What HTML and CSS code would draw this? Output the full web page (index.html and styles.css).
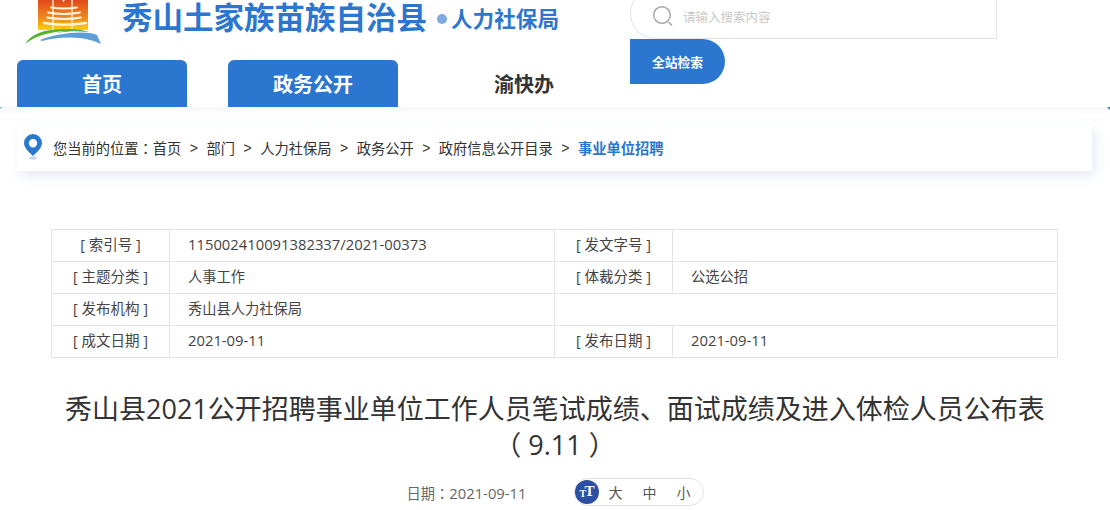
FILE: index.html
```html
<!DOCTYPE html>
<html lang="zh-CN">
<head>
<meta charset="utf-8">
<title>事业单位招聘</title>
<link rel="stylesheet" href="styles.css">
</head>
<body>
<header class="header">
  <div class="header-left">
    <div class="brand">
      <svg class="logo" width="80" height="47" viewBox="24 0 80 47">
        <defs>
          <linearGradient id="sky" x1="0" y1="0" x2="0" y2="1">
            <stop offset="0" stop-color="#e0481a"/>
            <stop offset="0.6" stop-color="#ee8a1c"/>
            <stop offset="1" stop-color="#fcd200"/>
          </linearGradient>
        </defs>
        <rect x="38" y="0" width="50" height="30" fill="url(#sky)"/>
        <path d="M62 0h3l-1.500 2z" fill="#fdf3dc"/>
        <g fill="none" stroke="#fff3dc" stroke-linecap="round">
          <path d="M53 0v30M72 0v30" stroke-width="1.300"/>
          <path d="M51 7.500q13 2 26 0" stroke-width="1.800"/>
          <path d="M48 12.500q16 3 32 0" stroke-width="2"/>
          <path d="M47 17.500q17 3 34 0" stroke-width="1.800"/>
          <path d="M44 23q19 3.500 42 0" stroke-width="2.600"/>
        </g>
        <path d="M25 44C31 34 44 29.500 62 29c9 0 18 0 23 2-22-1-45 1-60 13z" fill="#58b32c"/>
        <path d="M40 40c18-7 45-10 57-5l4 9C85 36 60 36 42 41z" fill="#5f9fd8"/>
        <path d="M56 33c12-3 26-3 33-1-10-1-22-1-33 1z" fill="#2f9f6a"/>
      </svg>
      <span class="site-name">秀山土家族苗族自治县</span>
      <span class="dot"></span>
      <span class="dept">人力社保局</span>
    </div>
    <nav class="nav">
      <a class="tab tab-on">首页</a>
      <a class="tab tab-on">政务公开</a>
      <a class="tab">渝快办</a>
    </nav>
  </div>
  <div class="header-right">
    <div class="search-box">
      <svg class="search-icon" width="22" height="22" viewBox="0 0 22 22">
        <circle cx="10" cy="10" r="8.300" fill="none" stroke="#a8a8a8" stroke-width="1.500"/>
        <path d="M16.500 17l3.500 3.500" stroke="#a8a8a8" stroke-width="1.500" fill="none"/>
      </svg>
      <span class="placeholder">请输入搜索内容</span>
    </div>
    <button class="search-btn">全站检索</button>
  </div>
</header>

<main class="main">
  <div class="crumbs">
    <svg class="pin" width="20" height="28" viewBox="0 0 20 28">
      <ellipse cx="10" cy="25" rx="4" ry="1.700" fill="#c5d9f0"/>
      <path fill-rule="evenodd" d="M10 1a9 9 0 0 1 9 9c0 5-5 9-9 13-4-4-9-8-9-13a9 9 0 0 1 9-9zm0 5a4.200 4.200 0 1 0 0 8.400 4.200 4.200 0 0 0 0-8.400z" fill="#2b78cf"/>
    </svg>
    <span class="crumb-text">您当前的位置<span class="colon" lang="zh-Hant">：</span>首页</span>
    <span class="sep">&gt;</span><span class="crumb-text">部门</span>
    <span class="sep">&gt;</span><span class="crumb-text">人力社保局</span>
    <span class="sep">&gt;</span><span class="crumb-text">政务公开</span>
    <span class="sep">&gt;</span><span class="crumb-text">政府信息公开目录</span>
    <span class="sep">&gt;</span><span class="crumb-text crumb-on">事业单位招聘</span>
  </div>

  <table class="info">
    <colgroup><col class="c1"><col class="c2"><col class="c3"><col class="c4"></colgroup>
    <tr><th>[ 索引号 ]</th><td><span class="num">115002410091382337/2021-00373</span></td><th>[ 发文字号 ]</th><td></td></tr>
    <tr><th>[ 主题分类 ]</th><td>人事工作</td><th>[ 体裁分类 ]</th><td>公选公招</td></tr>
    <tr><th>[ 发布机构 ]</th><td>秀山县人力社保局</td><td colspan="2"></td></tr>
    <tr><th>[ 成文日期 ]</th><td><span class="num">2021-09-11</span></td><th>[ 发布日期 ]</th><td><span class="num">2021-09-11</span></td></tr>
  </table>

  <h1 class="title">秀山县2021公开招聘事业单位工作人员笔试成绩、面试成绩及进入体检人员公布表（ 9.11 ）</h1>

  <div class="meta">
    <span class="date">日期<span class="colon" lang="zh-Hant">：</span><span class="num">2021-09-11</span></span>
    <div class="fontsize">
      <span class="tt"><svg width="24" height="24" viewBox="0 0 24 24"><circle cx="12" cy="12" r="12" fill="#2b4fa2"/></svg><b class="tt-small">T</b><b class="tt-big">T</b></span>
      <span class="fs">大</span><span class="fs">中</span><span class="fs">小</span>
    </div>
  </div>
</main>
</body>
</html>
```
FILE: styles.css
```css
* { box-sizing: border-box; }
html, body { margin: 0; padding: 0; }
body {
  width: 1110px;
  height: 510px;
  overflow: hidden;
  background: #fff;
  font-family: "Open Sans", "Noto Sans CJK SC", "Liberation Sans", sans-serif;
  color: #333;
}
.header { display: flex; height: 107px; overflow: hidden; }
.header-left { width: 630px; padding-left: 17px; }
.brand { display: flex; align-items: flex-start; height: 60px; font-family: "Noto Sans CJK SC", sans-serif; }
.logo { flex: none; margin-left: 7px; display: block; }
.site-name {
  margin-left: 18px;
  font-size: 30.500px;
  font-weight: 700;
  line-height: 32px;
  color: #2b76cf;
  white-space: nowrap;
}
.dot { width: 10px; height: 10px; margin: 14px 0 0 10px; border-radius: 50%; background: #7dabe0; flex: none; }
.dept { margin: 4px 0 0 4px; font-size: 21.600px; font-weight: 700; line-height: 28px; color: #2b76cf; white-space: nowrap; }
.nav { display: flex; gap: 41px; font-family: "Noto Sans CJK SC", sans-serif; }
.tab {
  width: 170px;
  height: 47px;
  border-radius: 6px 6px 0 0;
  font-size: 20px;
  font-weight: 700;
  line-height: 47px;
  text-align: center;
  color: #333;
}
.tab-on { background: #2b76cf; color: #fff; }
.header-right { width: 367px; }
.search-box {
  display: flex;
  align-items: center;
  height: 51px;
  margin-top: -12px;
  padding: 5px 0 0 21px;
  border: 1px solid #e2e2e2;
  border-radius: 26px 0 0 26px;
}
.search-icon { flex: none; }
.placeholder { margin-left: 9px; font-size: 12.500px; color: #c8c8c8; font-family: "Noto Sans CJK SC", sans-serif; }
.search-btn {
  display: block;
  width: 95px;
  height: 45px;
  margin: 0;
  padding: 0;
  border: 0;
  border-radius: 0 23px 23px 0;
  background: #2b76cf;
  color: #fff;
  font: 700 12.800px "Noto Sans CJK SC", sans-serif;
}
.main { position: relative; height: 403px; background: linear-gradient(#f7f7f7, #fff 8px); padding-top: 18px; }
.main::before, .main::after {
  content: "";
  position: absolute;
  top: 0;
  border-style: solid;
  border-width: 3px 0 0 3px;
}
.main::before { left: 0; border-color: #8fb6e4 transparent transparent transparent; border-width: 2px 3px 0 0; }
.main::after { right: 0; border-color: #2b76cf transparent transparent transparent; }
.crumbs {
  display: flex;
  align-items: center;
  width: 1075px;
  height: 46px;
  margin-left: 17px;
  padding: 0 0 1px 6px;
  background: #fff;
  box-shadow: 3px 5px 12px rgba(190, 205, 225, 0.4);
  font-size: 14.250px;
  color: #333;
}
.pin { flex: none; margin: 0 10px 1px 0; }
.sep { margin: 0 8.500px; font-family: "Liberation Sans", sans-serif; font-size: 14px; }
.crumb-on { color: #2b76cf; font-weight: 700; }
.colon { font-family: "Noto Sans CJK TC", sans-serif; }
.info {
  width: 1007px;
  margin: 58px 0 0 51px;
  border-collapse: collapse;
  table-layout: fixed;
  font-size: 14.250px;
}
.c1 { width: 118px; }
.c2 { width: 385px; }
.c3 { width: 118px; }
.info th, .info td {
  height: 32px;
  padding: 0 0 2px;
  border: 1px solid #e4e4e4;
  font-weight: 400;
  color: #444;
  line-height: 20px;
}
.info th { text-align: center; font-size: 14.500px; }
.info td { padding-left: 18px; }
.num { font-size: 14.800px; }
.title {
  width: 1000px;
  margin: 33px auto 0;
  font-size: 27px;
  font-weight: 400;
  line-height: 36px;
  text-align: center;
  color: #333;
}
.meta { display: flex; align-items: center; justify-content: center; gap: 47px; margin-top: 15px; }
.date { font-size: 14.250px; color: #666; }
.fontsize {
  display: flex;
  align-items: center;
  width: 130px;
  height: 28px;
  border: 1px solid #e2e2e2;
  border-radius: 14px;
  font-size: 14px;
  color: #555;
}
.tt { position: relative; width: 24px; height: 24px; margin: 0 10px 0 0; flex: none; }
.tt svg { display: block; }
.tt-small, .tt-big { position: absolute; color: #fff; font-family: "Liberation Serif", serif; line-height: 1; }
.tt-small { left: 5px; top: 9px; font-size: 10px; }
.tt-big { left: 10px; top: 4px; font-size: 15px; }
.fs { flex: none; width: 34px; }
.fs:last-child { width: auto; }
```
